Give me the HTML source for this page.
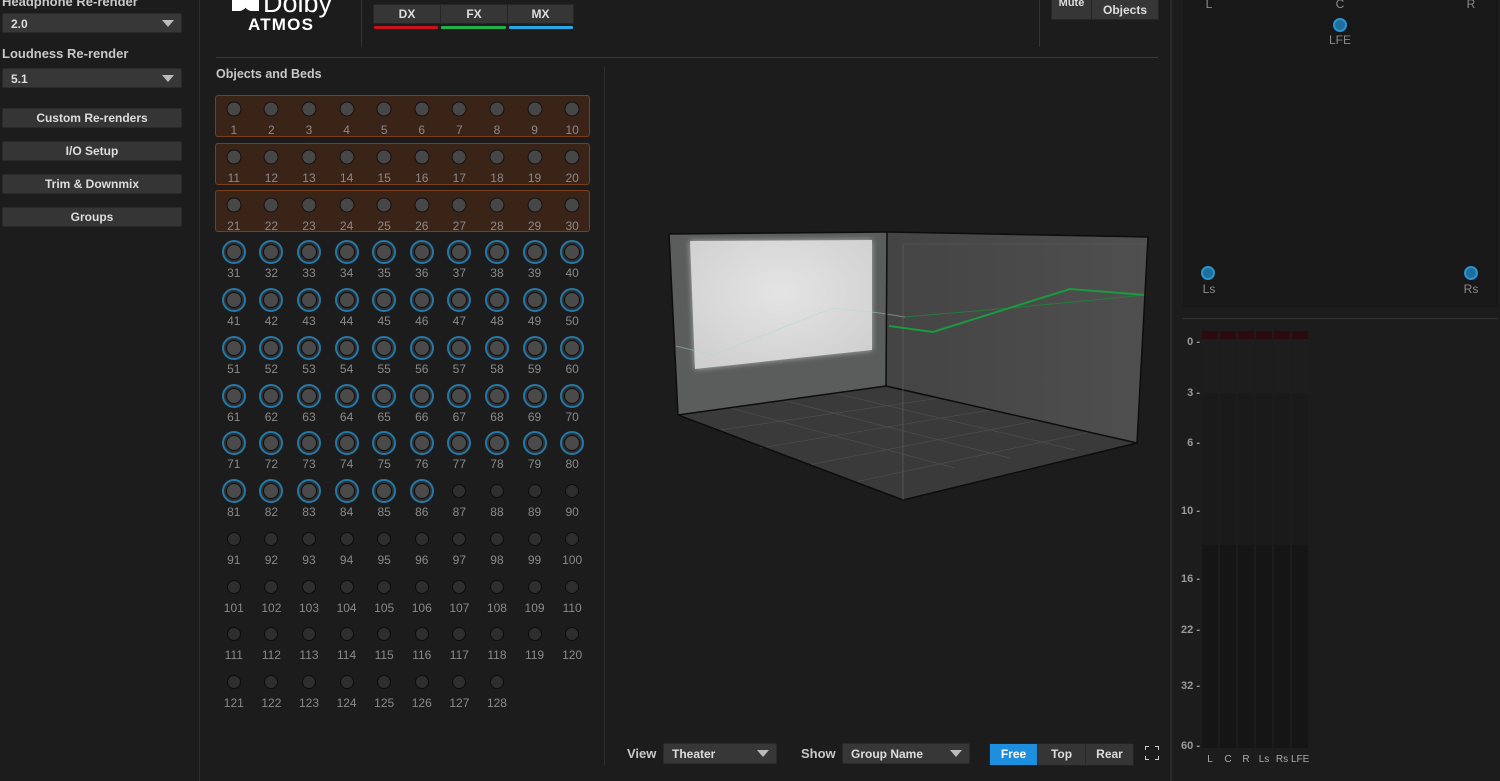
<!DOCTYPE html>
<html><head><meta charset="utf-8"><style>
*{margin:0;padding:0;box-sizing:border-box}
body{width:1500px;height:781px;background:#1c1c1c;font-family:"Liberation Sans",sans-serif;position:relative;overflow:hidden;color:#ccc}
.a{position:absolute}
.lbl{font-size:13px;font-weight:bold;color:#c8c8c8}
.dd{position:absolute;left:2px;width:180px;height:20px;background:#373737;border:1px solid #2a2a2a;border-radius:2px;font-size:12px;font-weight:bold;color:#ddd;padding:3px 0 0 8px}
.dd:after{content:"";position:absolute;right:7px;top:6px;border-left:6px solid transparent;border-right:6px solid transparent;border-top:7px solid #bbb}
.btn{position:absolute;left:2px;width:180px;height:20px;background:#353535;border:1px solid #2a2a2a;border-radius:2px;font-size:12px;font-weight:bold;color:#ddd;text-align:center;line-height:18px}
.grid{position:absolute;left:215px;top:99px;width:376px;display:grid;grid-template-columns:repeat(10,37.6px);grid-auto-rows:47.75px}
.c{position:relative;text-align:center;font-size:12px;color:#8a8a8a;padding-top:24px;line-height:14px}
.c i{position:absolute;left:50%;top:10px;transform:translate(-50%,-50%);border-radius:50%}
.b i{width:15px;height:15px;background:#474747;border:1.3px solid #111}
.o i{width:24px;height:24px;border:2.5px solid #2478a8;background:#2e2e2e}
.o i:after{content:"";position:absolute;left:50%;top:50%;width:14px;height:14px;transform:translate(-50%,-50%);border-radius:50%;background:#4a4a4a;border:1.3px solid #0e0e0e}
.n i{width:14px;height:14px;background:#2e2e2e;border:1.3px solid #0c0c0c}
.bed{position:absolute;left:215px;width:375px;height:42px;background:#3a2417;border:1px solid #7c3e18;border-radius:3px}
.seg{position:absolute;height:20px;top:4px;background:#363636;border:1px solid #262626;font-size:12px;font-weight:bold;color:#ddd;text-align:center;line-height:18px}
.ml{position:absolute;left:1180px;width:20px;text-align:right;font-size:11px;font-weight:bold;color:#9a9a9a}
.mc{position:absolute;top:331px;width:16px;height:417px;background:linear-gradient(#1d1d1d 0,#1d1d1d 62px,#1a1a1a 62px,#1a1a1a 214px,#151515 214px)}
.mc:before{content:"";position:absolute;left:0;top:0;width:16px;height:8px;background:#2b0b10}
.mlab{position:absolute;top:754px;font-size:10px;color:#aaa;text-align:center;width:18px}
.sp{position:absolute;font-size:12px;color:#8a8a8a;text-align:center;width:40px}
.dot{position:absolute;width:14px;height:14px;border-radius:50%;background:#1f6f9c;border:2.5px solid #2a93d0}
.bb{position:absolute;top:744px;height:21px;font-size:12px;font-weight:bold;color:#ddd;text-align:center;line-height:21px}
</style></head><body>
<div class="a lbl" style="left:2px;top:-6px">Headphone Re-render</div>
<div class="dd" style="top:13px">2.0</div>
<div class="a lbl" style="left:2px;top:46px">Loudness Re-render</div>
<div class="dd" style="top:68px">5.1</div>
<div class="btn" style="top:108px">Custom Re-renders</div>
<div class="btn" style="top:141px">I/O Setup</div>
<div class="btn" style="top:174px">Trim &amp; Downmix</div>
<div class="btn" style="top:207px">Groups</div>
<div class="a" style="left:199px;top:0;width:1px;height:781px;background:#2e2e2e"></div>

<div class="a" style="left:232px;top:-6px;width:15px;height:17px;background:#fff;border-radius:0 0 8px 0"></div>
<div class="a" style="left:244px;top:-6px;width:15px;height:17px;background:#fff;border-radius:0 0 0 8px"></div>
<div class="a" style="left:263px;top:-12px;font-size:27px;color:#fff">Dolby</div>
<div class="a" style="left:248px;top:15px;font-size:17px;font-weight:bold;color:#fff;letter-spacing:1.2px">ATMOS</div>
<div class="a" style="left:361px;top:0;width:1px;height:47px;background:#333"></div>
<div class="seg" style="left:373px;width:68px">DX</div>
<div class="seg" style="left:440px;width:68px">FX</div>
<div class="seg" style="left:507px;width:67px">MX</div>
<div class="a" style="left:374px;top:26px;width:64px;height:3px;background:#c8121e;border-radius:1px"></div>
<div class="a" style="left:441px;top:26px;width:65px;height:3px;background:#22b04a;border-radius:1px"></div>
<div class="a" style="left:509px;top:26px;width:64px;height:3px;background:#27a7e6;border-radius:1px"></div>
<div class="a" style="left:1039px;top:0;width:1px;height:47px;background:#333"></div>
<div class="seg" style="left:1051px;top:-2px;width:41px;height:22px;line-height:8px;font-size:11px">Mute</div>
<div class="seg" style="left:1091px;top:-2px;width:68px;height:22px;line-height:22px">Objects</div>
<div class="a" style="left:216px;top:57px;width:942px;height:1px;background:#3a3a3a"></div>

<div class="a lbl" style="left:216px;top:67px;font-size:12.5px">Objects and Beds</div>
<div class="bed" style="top:95px"></div>
<div class="bed" style="top:143px"></div>
<div class="bed" style="top:190px"></div>
<div class="grid">
<div class="c b"><i></i>1</div><div class="c b"><i></i>2</div><div class="c b"><i></i>3</div><div class="c b"><i></i>4</div><div class="c b"><i></i>5</div><div class="c b"><i></i>6</div><div class="c b"><i></i>7</div><div class="c b"><i></i>8</div><div class="c b"><i></i>9</div><div class="c b"><i></i>10</div>
<div class="c b"><i></i>11</div><div class="c b"><i></i>12</div><div class="c b"><i></i>13</div><div class="c b"><i></i>14</div><div class="c b"><i></i>15</div><div class="c b"><i></i>16</div><div class="c b"><i></i>17</div><div class="c b"><i></i>18</div><div class="c b"><i></i>19</div><div class="c b"><i></i>20</div>
<div class="c b"><i></i>21</div><div class="c b"><i></i>22</div><div class="c b"><i></i>23</div><div class="c b"><i></i>24</div><div class="c b"><i></i>25</div><div class="c b"><i></i>26</div><div class="c b"><i></i>27</div><div class="c b"><i></i>28</div><div class="c b"><i></i>29</div><div class="c b"><i></i>30</div>
<div class="c o"><i></i>31</div><div class="c o"><i></i>32</div><div class="c o"><i></i>33</div><div class="c o"><i></i>34</div><div class="c o"><i></i>35</div><div class="c o"><i></i>36</div><div class="c o"><i></i>37</div><div class="c o"><i></i>38</div><div class="c o"><i></i>39</div><div class="c o"><i></i>40</div>
<div class="c o"><i></i>41</div><div class="c o"><i></i>42</div><div class="c o"><i></i>43</div><div class="c o"><i></i>44</div><div class="c o"><i></i>45</div><div class="c o"><i></i>46</div><div class="c o"><i></i>47</div><div class="c o"><i></i>48</div><div class="c o"><i></i>49</div><div class="c o"><i></i>50</div>
<div class="c o"><i></i>51</div><div class="c o"><i></i>52</div><div class="c o"><i></i>53</div><div class="c o"><i></i>54</div><div class="c o"><i></i>55</div><div class="c o"><i></i>56</div><div class="c o"><i></i>57</div><div class="c o"><i></i>58</div><div class="c o"><i></i>59</div><div class="c o"><i></i>60</div>
<div class="c o"><i></i>61</div><div class="c o"><i></i>62</div><div class="c o"><i></i>63</div><div class="c o"><i></i>64</div><div class="c o"><i></i>65</div><div class="c o"><i></i>66</div><div class="c o"><i></i>67</div><div class="c o"><i></i>68</div><div class="c o"><i></i>69</div><div class="c o"><i></i>70</div>
<div class="c o"><i></i>71</div><div class="c o"><i></i>72</div><div class="c o"><i></i>73</div><div class="c o"><i></i>74</div><div class="c o"><i></i>75</div><div class="c o"><i></i>76</div><div class="c o"><i></i>77</div><div class="c o"><i></i>78</div><div class="c o"><i></i>79</div><div class="c o"><i></i>80</div>
<div class="c o"><i></i>81</div><div class="c o"><i></i>82</div><div class="c o"><i></i>83</div><div class="c o"><i></i>84</div><div class="c o"><i></i>85</div><div class="c o"><i></i>86</div><div class="c n"><i></i>87</div><div class="c n"><i></i>88</div><div class="c n"><i></i>89</div><div class="c n"><i></i>90</div>
<div class="c n"><i></i>91</div><div class="c n"><i></i>92</div><div class="c n"><i></i>93</div><div class="c n"><i></i>94</div><div class="c n"><i></i>95</div><div class="c n"><i></i>96</div><div class="c n"><i></i>97</div><div class="c n"><i></i>98</div><div class="c n"><i></i>99</div><div class="c n"><i></i>100</div>
<div class="c n"><i></i>101</div><div class="c n"><i></i>102</div><div class="c n"><i></i>103</div><div class="c n"><i></i>104</div><div class="c n"><i></i>105</div><div class="c n"><i></i>106</div><div class="c n"><i></i>107</div><div class="c n"><i></i>108</div><div class="c n"><i></i>109</div><div class="c n"><i></i>110</div>
<div class="c n"><i></i>111</div><div class="c n"><i></i>112</div><div class="c n"><i></i>113</div><div class="c n"><i></i>114</div><div class="c n"><i></i>115</div><div class="c n"><i></i>116</div><div class="c n"><i></i>117</div><div class="c n"><i></i>118</div><div class="c n"><i></i>119</div><div class="c n"><i></i>120</div>
<div class="c n"><i></i>121</div><div class="c n"><i></i>122</div><div class="c n"><i></i>123</div><div class="c n"><i></i>124</div><div class="c n"><i></i>125</div><div class="c n"><i></i>126</div><div class="c n"><i></i>127</div><div class="c n"><i></i>128</div>
</div>
<div class="a" style="left:604px;top:67px;width:1px;height:698px;background:#2e2e2e"></div>

<svg class="a" style="left:0;top:0" width="1500" height="781">
<defs>
<radialGradient id="scr" cx="0.5" cy="0.4" r="0.7"><stop offset="0" stop-color="#e4e4e4"/><stop offset="1" stop-color="#cfcfcf"/></radialGradient>
<linearGradient id="rw" x1="0" y1="0" x2="1" y2="0"><stop offset="0" stop-color="#444"/><stop offset="1" stop-color="#4e4f4e"/></linearGradient>
<filter id="gl"><feGaussianBlur stdDeviation="3"/></filter>
</defs>
<polygon points="678,415 886,386 1137,443 903,500" fill="#393a39"/>
<polygon points="669,234 887,232 886,386 678,415" fill="#5a5d5b"/>
<polygon points="887,232 1148,237 1137,443 886,386" fill="url(#rw)"/>
<polygon points="690,241 872,240 872,350 695,369" fill="#eee" filter="url(#gl)" opacity="0.6"/>
<polygon points="690,241 872,240 872,350 695,369" fill="url(#scr)"/>
<g stroke="#4c4d4c" stroke-width="0.7" fill="none">
<line x1="730" y1="408" x2="955" y2="468"/><line x1="782" y1="400" x2="1010" y2="458"/><line x1="834" y1="393" x2="1075" y2="450"/>
<line x1="720" y1="430" x2="940" y2="398"/><line x1="760" y1="448" x2="990" y2="410"/><line x1="808" y1="465" x2="1040" y2="420"/><line x1="855" y1="482" x2="1090" y2="432"/>
</g>
<polyline points="676,346 713,355 833,308 880,313 905,317" fill="none" stroke="#a8dcd0" stroke-width="1" opacity="0.45"/>
<polyline points="905,317 1010,308 1145,295" fill="none" stroke="#1a8a38" stroke-width="1" opacity="0.8"/>
<polyline points="889,326 933,332 1070,289 1145,295" fill="none" stroke="#1a9a3e" stroke-width="2"/>
<g stroke="#0d0d0d" stroke-width="1.5" fill="none">
<polyline points="669,234 887,232 1148,237 1137,443 903,500 678,415 669,234"/>
<line x1="887" y1="232" x2="886" y2="386"/><polyline points="678,415 886,386 1137,443"/>
</g>
<line x1="903" y1="244" x2="903" y2="500" stroke="#6a6a6a" stroke-width="1" opacity="0.5"/>
<line x1="903" y1="244" x2="1146" y2="244" stroke="#666" stroke-width="1" opacity="0.35"/>
</svg>

<div class="a lbl" style="left:627px;top:746px">View</div>
<div class="dd" style="left:663px;top:743px;width:114px;height:21px">Theater</div>
<div class="a lbl" style="left:801px;top:746px">Show</div>
<div class="dd" style="left:842px;top:743px;width:128px;height:21px">Group Name</div>
<div class="a" style="left:989px;top:743px;width:145px;height:23px;background:#2a2a2a;border:1px solid #222"></div>
<div class="bb" style="left:990px;width:47px;background:#1e8ede;color:#fff">Free</div>
<div class="bb" style="left:1038px;width:47px;background:#353535">Top</div>
<div class="bb" style="left:1086px;width:47px;background:#353535">Rear</div>
<div class="a" style="left:1145px;top:746px;width:14px;height:14px">
<div class="a" style="left:0;top:0;width:4px;height:4px;border-left:1.5px solid #ccc;border-top:1.5px solid #ccc"></div>
<div class="a" style="right:0;top:0;width:4px;height:4px;border-right:1.5px solid #ccc;border-top:1.5px solid #ccc"></div>
<div class="a" style="left:0;bottom:0;width:4px;height:4px;border-left:1.5px solid #ccc;border-bottom:1.5px solid #ccc"></div>
<div class="a" style="right:0;bottom:0;width:4px;height:4px;border-right:1.5px solid #ccc;border-bottom:1.5px solid #ccc"></div>
</div>

<div class="a" style="left:1170px;top:0;width:2px;height:781px;background:#2a2a2a"></div>
<div class="a" style="left:1183px;top:0;width:315px;height:307px;background:#181818"></div>
<div class="sp" style="left:1189px;top:-3px">L</div>
<div class="sp" style="left:1320px;top:-3px">C</div>
<div class="sp" style="left:1451px;top:-3px">R</div>
<div class="dot" style="left:1333px;top:18px"></div>
<div class="sp" style="left:1320px;top:33px">LFE</div>
<div class="dot" style="left:1201px;top:266px"></div>
<div class="sp" style="left:1189px;top:282px">Ls</div>
<div class="dot" style="left:1464px;top:266px"></div>
<div class="sp" style="left:1451px;top:282px">Rs</div>
<div class="a" style="left:1183px;top:318px;width:315px;height:1px;background:#333"></div>
<div class="mc" style="left:1202px"></div><div class="mc" style="left:1220px"></div><div class="mc" style="left:1238px"></div><div class="mc" style="left:1256px"></div><div class="mc" style="left:1274px"></div><div class="mc" style="left:1292px"></div>
<div class="ml" style="top:336px">0 -</div>
<div class="ml" style="top:387px">3 -</div>
<div class="ml" style="top:437px">6 -</div>
<div class="ml" style="top:505px">10 -</div>
<div class="ml" style="top:573px">16 -</div>
<div class="ml" style="top:624px">22 -</div>
<div class="ml" style="top:680px">32 -</div>
<div class="ml" style="top:740px">60 -</div>
<div class="mlab" style="left:1201px">L</div><div class="mlab" style="left:1219px">C</div><div class="mlab" style="left:1237px">R</div><div class="mlab" style="left:1255px">Ls</div><div class="mlab" style="left:1273px">Rs</div><div class="mlab" style="left:1291px">LFE</div>
</body></html>
